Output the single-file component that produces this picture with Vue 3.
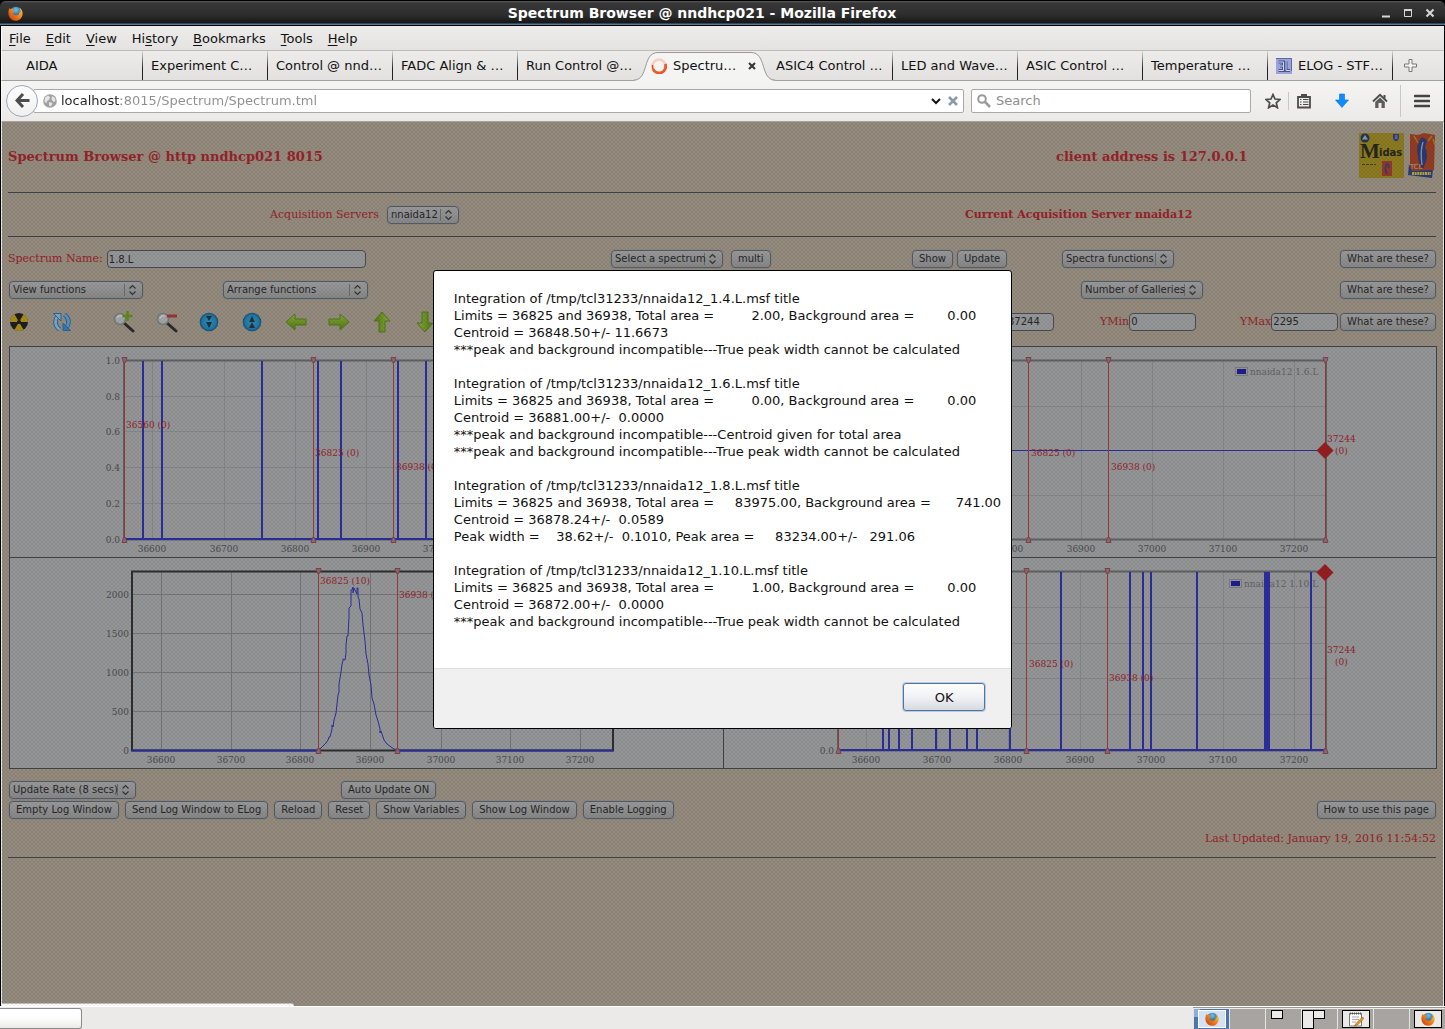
<script setup>
import { ref } from 'vue'

const menus = [
  ['', 'F', 'ile'],
  ['', 'E', 'dit'],
  ['', 'V', 'iew'],
  ['Hi', 's', 'tory'],
  ['', 'B', 'ookmarks'],
  ['', 'T', 'ools'],
  ['', 'H', 'elp'],
]

const tabs = [
  { label: 'AIDA' },
  { label: 'Experiment C…' },
  { label: 'Control @ nnd…' },
  { label: 'FADC Align & …' },
  { label: 'Run Control @…', edge: true },
  { label: 'Spectru…', active: true, edge: true },
  { label: 'ASIC4 Control …' },
  { label: 'LED and Wave…' },
  { label: 'ASIC Control …' },
  { label: 'Temperature …' },
  { label: 'ELOG - STF…', elog: true },
]

const url = ref('localhost:8015/Spectrum/Spectrum.tml')
const search = ref('')
const spectrumName = ref('1.8.L')
const xMax = ref('37244')
const yMin = ref('0')
const yMax = ref('2295')

const ticks = (xs, first) => xs.map((x, i) => ({ x, label: String(first + i * 100) }))

const charts = [
  {
    id: '1.4.L',
    view: '1 1 713 210',
    frame: { x: 115, y: 14, w: 489, h: 180 },
    tone: '#5f6163',
    xTicks: ticks([143, 215, 286, 357, 428], 36600),
    yTicks: [[14, '1.0'], [50, '0.8'], [85, '0.6'], [121, '0.4'], [157, '0.2'], [193, '0.0']].map(([y, label]) => ({ y, label })),
    yRight: 111,
    xLabelY: 206,
    spikes: [134, 153, 253, 309, 332, 389, 417],
    base: 193,
    cursors: [115, 304, 384],
    notes: [[117, 82, '36560 (0)'], [306, 110, '36825 (0)'], [387, 124, '36938 (0)']],
  },
  {
    id: '1.6.L',
    view: '0 1 713 210',
    frame: { x: 115, y: 14, w: 488, h: 180 },
    tone: '#5f6163',
    xTicks: ticks([286, 358, 429, 500, 571], 36800),
    yTicks: [60, 104, 149].map((y) => ({ y, label: '' })),
    yRight: 111,
    xLabelY: 206,
    spikes: [],
    base: 104,
    cursors: [115, 305, 385, 602],
    notes: [[308, 110, '36825 (0)'], [388, 124, '36938 (0)'], [604, 96, '37244'], [612, 108, '(0)']],
    diamond: [602, 104],
    legend: { x: 514, y: 23, text: 'nnaida12 1.6.L' },
  },
  {
    id: '1.8.L',
    view: '1 1 713 210',
    frame: { x: 123, y: 14, w: 481, h: 180 },
    tone: '#2c2e30',
    strong: true,
    xTicks: ticks([152, 222, 291, 361, 432, 501, 571], 36600),
    yTicks: [[37, '2000'], [76, '1500'], [115, '1000'], [154, '500'], [193, '0']].map(([y, label]) => ({ y, label })),
    yRight: 120,
    xLabelY: 206,
    spikes: [],
    base: 193,
    cursors: [309, 388],
    notes: [[311, 27, '36825 (10)'], [390, 41, '36938 (0)']],
    peak: 'M309 193L311 192L314 189L317 186L319 183L320 180H321L322 176L323 172V168L324 170L325 163L327 156L328 147L329 138L330 135V127L332 115L333 107L334 104V102L336 103L337 96V88L338 79H339L340 60V51L342 49L342 45V33H343L344 30V36L345 31L347 35L348 37V31H349V40L350 42L351 52L353 56L354 68L355 76L356 84L357 97L359 107L360 118L362 128L363 141L365 147L367 158L369 164L371 172V176L372 174L375 183L378 187L382 190L385 192L388 193',
  },
  {
    id: '1.10.L',
    view: '0 1 713 210',
    frame: { x: 115, y: 14, w: 488, h: 180 },
    tone: '#5f6163',
    xTicks: ticks([143, 214, 285, 357, 428, 500, 571], 36600),
    yTicks: [[50, ''], [86, ''], [121, ''], [157, ''], [193, '0.0']].map(([y, label]) => ({ y, label })),
    yRight: 111,
    xLabelY: 206,
    spikes: [160, 166, 176, 189, 213, 227, 244, 254, 287, 338, 407, 420, 428, 474, 542, 544, 546, 588],
    base: 193,
    cursors: [115, 303, 384, 602],
    notes: [[306, 110, '36825 (0)'], [386, 124, '36938 (0)'], [604, 96, '37244'], [612, 108, '(0)']],
    diamond: [602, 15],
    legend: { x: 508, y: 24, text: 'nnaida12 1.10.L' },
  },
]

const report = [
  'Integration of /tmp/tcl31233/nnaida12_1.4.L.msf title',
  'Limits = 36825 and 36938, Total area =         2.00, Background area =        0.00',
  'Centroid = 36848.50+/- 11.6673',
  '***peak and background incompatible---True peak width cannot be calculated',
  '',
  'Integration of /tmp/tcl31233/nnaida12_1.6.L.msf title',
  'Limits = 36825 and 36938, Total area =         0.00, Background area =        0.00',
  'Centroid = 36881.00+/-  0.0000',
  '***peak and background incompatible---Centroid given for total area',
  '***peak and background incompatible---True peak width cannot be calculated',
  '',
  'Integration of /tmp/tcl31233/nnaida12_1.8.L.msf title',
  'Limits = 36825 and 36938, Total area =     83975.00, Background area =      741.00',
  'Centroid = 36878.24+/-  0.0589',
  'Peak width =    38.62+/-  0.1010, Peak area =     83234.00+/-   291.06',
  '',
  'Integration of /tmp/tcl31233/nnaida12_1.10.L.msf title',
  'Limits = 36825 and 36938, Total area =         1.00, Background area =        0.00',
  'Centroid = 36872.00+/-  0.0000',
  '***peak and background incompatible---True peak width cannot be calculated',
].join('\n')

const logButtons = ['Empty Log Window', 'Send Log Window to ELog', 'Reload', 'Reset', 'Show Variables', 'Show Log Window', 'Enable Logging']
</script>

<template>
  <svg class="defs" aria-hidden="true">
    <defs>
      <radialGradient id="globe" cx="50%" cy="25%" r="70%">
        <stop offset="0" stop-color="#6cc3ee" />
        <stop offset="1" stop-color="#14386f" />
      </radialGradient>
      <linearGradient id="fox" x1="1" y1="0" x2="0" y2="1">
        <stop offset="0" stop-color="#ffd83a" />
        <stop offset=".45" stop-color="#f0861a" />
        <stop offset="1" stop-color="#c8330d" />
      </linearGradient>
      <linearGradient id="leaf" x1="0" y1="0" x2="0" y2="1">
        <stop offset="0" stop-color="#8da83c" />
        <stop offset="1" stop-color="#4c7a10" />
      </linearGradient>
      <radialGradient id="disc">
        <stop offset="0" stop-color="#2f8fb8" />
        <stop offset=".75" stop-color="#1f78a6" />
        <stop offset="1" stop-color="#1a4a72" />
      </radialGradient>
      <symbol id="firefox" viewBox="0 0 16 16">
        <circle cx="8.4" cy="7.4" r="6.6" fill="url(#globe)" />
        <path d="M1.6 2.2C1.9 3 2.4 3.2 3 3.200C4 2.900 5.500 3 6.200 4C5.200 4.400 5.300 5.300 6.800 5.800C6.600 7 5.500 7.200 5.200 7.800C5.400 9.500 8 10.600 10.200 9.600C11.600 9 12.600 7.500 12.200 5.600C13 6 13.200 6.800 13.200 7.300C13.700 5.200 13 3 11.800 1.600C14.600 3 15.900 6 15.500 9C15 13 12 15.600 8.200 15.700C4 15.700.9 12.600.5 8.600C.3 6 .8 3.900 1.600 2.200Z" fill="url(#fox)" />
      </symbol>
      <symbol id="arrow" viewBox="0 0 22 20">
        <path d="M1 10L10 2V7H21V13H10V18Z" fill="url(#leaf)" stroke="#4f771c" />
      </symbol>
    </defs>
  </svg>

  <div class="desktop">
    <div class="window">
      <header class="titlebar">
        <svg class="app-icon" width="15" height="15"><use href="#firefox" /></svg>
        <h1>Spectrum Browser @ nndhcp021 - Mozilla Firefox</h1>
        <div class="win-buttons">
          <button aria-label="Minimize"><svg width="10" height="10"><path d="M1 8.500H9" stroke="#d6d6d6" stroke-width="2" /></svg></button>
          <button aria-label="Maximize"><svg width="10" height="10"><path d="M1.500 2.500H8.500V8.500H1.500Z" fill="none" stroke="#d6d6d6" /><path d="M1 2H9" stroke="#d6d6d6" stroke-width="2" /></svg></button>
          <button aria-label="Close"><svg width="10" height="10"><path d="M1.500 1.500L8.500 8.500M8.500 1.500L1.500 8.500" stroke="#d6d6d6" stroke-width="2" /></svg></button>
        </div>
      </header>

      <nav class="menubar">
        <a v-for="m in menus" :key="m.join('')" href="#">{{ m[0] }}<u>{{ m[1] }}</u>{{ m[2] }}</a>
      </nav>

      <div class="tabs" role="tablist">
        <button v-for="t in tabs" :key="t.label" class="tab" :class="{ active: t.active, edge: t.edge }" role="tab">
          <svg v-if="t.active" class="tab-shape" viewBox="0 0 141 30" preserveAspectRatio="none">
            <path d="M0 29.500C15 29.500 8 1.500 24 1.500H117C133 1.500 126 29.500 141 29.500V30H0Z" fill="#f4f4f3" />
            <path d="M0 29C15 29 8 1.500 24 1.500H117C133 1.500 126 29 141 29" fill="none" stroke="#999" />
          </svg>
          <svg v-if="t.active" class="tab-icon" width="16" height="16" viewBox="0 0 16 16">
            <circle cx="8" cy="8" r="6.500" fill="none" stroke="#f6cfc0" stroke-width="2.600" />
            <path d="M14.200 6A6.500 6.500 0 0 1 2 11" fill="none" stroke="#ea5a2c" stroke-width="2.800" />
            <path d="M2 11A6.500 6.500 0 0 1 1.600 7" fill="none" stroke="#d8481c" stroke-width="1.500" />
          </svg>
          <svg v-if="t.elog" class="tab-icon" width="16" height="16" viewBox="0 0 16 16">
            <path d="M0 0H16V16H0Z" fill="#9ba3dc" />
            <path d="M0 .5H15.500V13" fill="none" stroke="#5c6aa0" />
            <path d="M2.500 4H7.500V12.500H2.500M4 8H7.500M10 3.500V12.500H14" fill="none" stroke="#48548c" stroke-width="3" />
            <path d="M2.500 4H7.500V12.500H2.500M4 8H7.500M10 3.500V12.500H14" fill="none" stroke="#cdd2f6" />
          </svg>
          <span>{{ t.label }}</span>
          <svg v-if="t.active" class="tab-close" width="8" height="8"><path d="M1 1L7 7M7 1L1 7" stroke="#333" stroke-width="2" /></svg>
        </button>
        <button class="new-tab" aria-label="New tab">
          <svg width="13" height="13"><path d="M5 .5H8V5H12.500V8H8V12.500H5V8H.5V5H5Z" fill="#f4f4f4" stroke="#777" /></svg>
        </button>
      </div>

      <div class="navbar">
        <button class="back" aria-label="Back">
          <svg width="15" height="15"><path d="M8 1L2 7.500L8 14M2.500 7.500H14.500" fill="none" stroke="#4c4c4c" stroke-width="3" /></svg>
        </button>
        <div class="field address">
          <svg width="14" height="14" viewBox="0 0 14 14">
            <circle cx="7" cy="7" r="6.800" fill="#a0a0a0" />
            <path d="M2 3.500L5 1.500L7 3L6 6L4 7L3.500 9.500L1.500 7.500ZM9 2L12 4L12.500 7L10.500 8L8.500 5.500ZM6 8L9.500 9L8 12.500L6 11.500Z" fill="#e6e6e6" />
          </svg>
          <input v-model="url" aria-label="Address" />
          <svg width="12" height="12"><path d="M2 4L6 8L10 4" fill="none" stroke="#111" stroke-width="2" /></svg>
          <svg width="10" height="10"><path d="M1 1L9 9M9 1L1 9" stroke="#8c9aa8" stroke-width="2.500" /></svg>
        </div>
        <div class="field search">
          <svg width="14" height="14"><circle cx="5" cy="5" r="3.800" fill="none" stroke="#9a9a9a" stroke-width="2" /><path d="M8 8L13 13" stroke="#9a9a9a" stroke-width="2.500" /></svg>
          <input v-model="search" aria-label="Search" placeholder="Search" />
        </div>
        <div class="tools">
          <button aria-label="Bookmark"><svg width="16" height="16"><path d="M8 1.500L10 6L15 6.500L11.300 9.800L12.400 14.700L8 12.100L3.600 14.700L4.700 9.800L1 6.500L6 6Z" fill="none" stroke="#4c4c4c" stroke-width="1.700" /></svg></button>
          <i class="rule"></i>
          <button aria-label="Bookmarks menu"><svg width="16" height="16"><path d="M2 4H14V14.500H2Z" fill="none" stroke="#4c4c4c" stroke-width="1.800" /><path d="M5 1H11V4H5Z" fill="#4c4c4c" /><path d="M4 6.500H5.500M7 6.500H12.500M4 9H5.500M7 9H12.500M4 11.500H5.500M7 11.500H12.500" stroke="#4c4c4c" stroke-width="1.200" /></svg></button>
          <button class="wide" aria-label="Downloads"><svg width="16" height="16"><path d="M5.500 1H10.500V7H14.500L8 14.500L1.500 7H5.500Z" fill="#0f8cff" stroke="#0a72d8" stroke-width=".6" /></svg></button>
          <button class="wide" aria-label="Home"><svg width="16" height="16"><path d="M1 8.500L8 1.800L15 8.500" fill="none" stroke="#4c4c4c" stroke-width="1.800" /><path d="M11.500 2H13.500V6L11.500 4Z" fill="#4c4c4c" /><path d="M3.200 9L8 4.500L12.800 9V15H9.500V10H6.500V15H3.200Z" fill="#5c5c5c" /></svg></button>
          <i class="rule tall"></i>
          <button class="wide" aria-label="Open menu"><svg width="16" height="14"><path d="M1 2H15M1 7H15M1 12H15" stroke="#444" stroke-width="2.600" stroke-linecap="round" /></svg></button>
        </div>
      </div>

      <main class="page">
        <section class="head">
          <h2>Spectrum Browser @ http nndhcp021 8015</h2>
          <h2>client address is 127.0.0.1</h2>
          <div class="logos">
            <svg width="45" height="45" viewBox="0 0 45 45" role="img" aria-label="Midas">
              <path d="M0 0H45V45H0Z" fill="#8c7b20" />
              <circle cx="6" cy="5" r="4.500" fill="#233654" />
              <path d="M3 6.500L6 2L9 6.500Z" fill="#8d9aa4" />
              <path d="M34 1H40V5Q40 7 37 8.500Q34 7 34 5Z" fill="#2b3d7c" />
              <path d="M36 3H38.500M36 5H38.500" stroke="#9298a8" />
              <text x="1" y="25" font-size="21" class="midas">M</text>
              <text x="20" y="23" font-size="10" class="midas-sans">idas</text>
              <path d="M3 31.500H17" stroke="#44401f" stroke-dasharray="3 1" />
              <path d="M23 28H33V43H23Z" fill="#93392a" />
              <path d="M28 30Q25 36 28 41M29 31L30 35" fill="none" stroke="#303d78" stroke-width="1.600" />
            </svg>
            <svg width="28" height="45" viewBox="0 0 28 45" role="img" aria-label="TCL powered">
              <path d="M2 1L10 2L16 0L27 2L26 37L2 38Z" fill="#943c23" />
              <path d="M1 31L4 38L25 36L24 45L0 42Z" fill="#2a3c74" />
              <path d="M2 30L25 31V37L4 38Z" fill="#943c23" />
              <path d="M14 4Q7 12 10 24Q11 32 15 36L17 31Q21 22 17 14L19 7Z" fill="#283a72" />
              <path d="M15 9Q12 18 14 32" fill="none" stroke="#858fa8" stroke-width="1.400" />
              <path d="M6 3L10 10M20 8L24 3M25 6L27 12" stroke="#a17b28" stroke-width="1.400" />
              <text x="2" y="36" class="tcl">TCL</text>
              <path d="M4 40.500H23" stroke="#b0a63d" stroke-width="3" stroke-dasharray="2 .6" />
            </svg>
          </div>
        </section>
        <hr />
        <section class="servers">
          <div class="line wide-gap">
            <label for="server">Acquisition Servers</label>
            <select id="server" class="w72"><option>nnaida12</option></select>
          </div>
          <strong>Current Acquisition Server nnaida12</strong>
        </section>
        <hr />

        <section class="row row-name">
          <div class="line tight">
            <label for="spectrum">Spectrum Name:</label>
            <input id="spectrum" v-model="spectrumName" class="w259" />
          </div>
          <div class="line wide-gap">
            <select aria-label="Select a spectrum" class="w112"><option>Select a spectrum</option></select>
            <button>multi</button>
          </div>
          <div class="line tight"><button>Show</button><button>Update</button></div>
          <div class="line"><select aria-label="Spectra functions" class="w112"><option>Spectra functions</option></select></div>
          <button>What are these?</button>
        </section>

        <section class="row row-view">
          <select aria-label="View functions" class="w134"><option>View functions</option></select>
          <select aria-label="Arrange functions" class="w145"><option>Arrange functions</option></select>
          <select aria-label="Number of Galleries" class="w122"><option>Number of Galleries</option></select>
          <button>What are these?</button>
        </section>

        <section class="row row-range">
          <div class="icons">
            <button aria-label="Clear"><svg width="20" height="20" viewBox="0 0 20 20"><circle cx="10" cy="10" r="9" fill="#1f1f1f" /><path d="M10 10L5.500 2.200A9 9 0 0 1 14.500 2.200ZM10 10L19 10A9 9 0 0 1 14.500 17.800ZM10 10L5.500 17.800A9 9 0 0 1 1 10Z" fill="#a88c1c" transform="rotate(180 10 10)" /><circle cx="10" cy="10" r="2" fill="#1f1f1f" /></svg></button>
            <button aria-label="Refresh"><svg width="20" height="20" viewBox="0 0 20 20"><path d="M7.500 17.500Q1 12 5 5" fill="none" stroke="#27649e" stroke-width="4.400" /><path d="M7.500 17.500Q1 12 5 5" fill="none" stroke="#7fa6c4" stroke-width="2.600" /><path d="M1.500 1.500H9V9Z" fill="#7fa6c4" stroke="#27649e" /><path d="M12.500 2.500Q19 8 15 15" fill="none" stroke="#27649e" stroke-width="4.400" /><path d="M12.500 2.500Q19 8 15 15" fill="none" stroke="#5b93bd" stroke-width="2.600" /><path d="M18.500 18.500H11V11Z" fill="#3878ae" stroke="#27649e" /></svg></button>
            <button class="gap" aria-label="Zoom in"><svg width="22" height="22" viewBox="0 0 22 22"><path d="M11 12L20 20" stroke="#2b2b2b" stroke-width="3" stroke-linecap="round" /><circle cx="7" cy="8" r="5.500" fill="#a3a6a8" stroke="#77797b" stroke-width="1.500" /><path d="M4 7Q6 4 9 5" fill="none" stroke="#c1c3c4" stroke-width="1.500" /><path d="M14.500 0V10M9.500 5H19.500" stroke="#5d8a1c" stroke-width="2.600" /></svg></button>
            <button aria-label="Zoom out"><svg width="22" height="22" viewBox="0 0 22 22"><path d="M11 12L20 20" stroke="#2b2b2b" stroke-width="3" stroke-linecap="round" /><circle cx="7" cy="8" r="5.500" fill="#a3a6a8" stroke="#77797b" stroke-width="1.500" /><path d="M4 7Q6 4 9 5" fill="none" stroke="#c1c3c4" stroke-width="1.500" /><path d="M11 5H21" stroke="#9c3433" stroke-width="3" /></svg></button>
            <button aria-label="Compress"><svg width="20" height="20" viewBox="0 0 20 20"><circle cx="10" cy="10" r="9.300" fill="url(#disc)" /><path d="M7 4H13L10 9ZM7 10H13L10 16Z" fill="#25303a" /></svg></button>
            <button aria-label="Expand"><svg width="20" height="20" viewBox="0 0 20 20"><circle cx="10" cy="10" r="9.300" fill="url(#disc)" /><path d="M7 10H13L10 4ZM7 16H13L10 10Z" fill="#25303a" /></svg></button>
            <button aria-label="Left"><svg width="22" height="20"><use href="#arrow" /></svg></button>
            <button aria-label="Right"><svg class="flip" width="22" height="20"><use href="#arrow" /></svg></button>
            <button aria-label="Up"><svg class="up" width="22" height="20"><use href="#arrow" /></svg></button>
            <button aria-label="Down"><svg class="down" width="22" height="20"><use href="#arrow" /></svg></button>
          </div>
          <input v-model="xMax" class="w48" aria-label="XMax" />
          <div class="line none"><label for="ymin">YMin</label><input id="ymin" v-model="yMin" class="w67" /></div>
          <div class="line none"><label for="ymax">YMax</label><input id="ymax" v-model="yMax" class="w67" /></div>
          <button>What are these?</button>
        </section>

        <section class="gallery">
          <svg v-for="c in charts" :key="c.id" :viewBox="c.view" class="chart">
            <g :class="['grid', { strong: c.strong }]">
              <path v-for="t in c.xTicks" :key="t.x" :d="`M${t.x + 0.5} ${c.frame.y}V194`" />
              <path v-for="t in c.yTicks" :key="t.y" :d="`M${c.frame.x} ${t.y + 0.5}H${c.frame.x + c.frame.w}`" />
            </g>
            <rect :x="c.frame.x" :y="c.frame.y + 0.5" :width="c.frame.w" :height="c.frame.h - 1" fill="none" :stroke="c.tone" stroke-width="2" />
            <text v-for="t in c.xTicks" :key="'x' + t.x" class="tick" text-anchor="middle" :x="t.x" :y="c.xLabelY">{{ t.label }}</text>
            <text v-for="t in c.yTicks" :key="'y' + t.y" class="tick" text-anchor="end" :x="c.yRight" :y="t.y + 4">{{ t.label }}</text>
            <g v-if="c.legend">
              <rect :x="c.legend.x - 1.500" :y="c.legend.y - 1.500" width="12" height="8" class="key-frame" />
              <rect :x="c.legend.x" :y="c.legend.y" width="9" height="5" fill="#1d1e92" />
              <text :x="c.legend.x + 13" :y="c.legend.y + 6" class="legend">{{ c.legend.text }}</text>
            </g>
            <path v-if="c.base < 193" :d="`M${c.frame.x} ${c.base + 0.5}H${c.frame.x + c.frame.w}`" class="curve thin" />
            <path v-else :d="c.peak ? `M${c.frame.x} 193.5H309M388 193.5H604` : `M${c.frame.x} 193H${c.frame.x + c.frame.w}`" class="curve" />
            <path v-for="s in c.spikes" :key="'s' + s" :d="`M${s} 15V193`" class="spike" />
            <path v-if="c.peak" :d="c.peak" class="curve thin" />
            <g v-for="r in c.cursors" :key="'r' + r" class="cursor">
              <path :d="`M${r + 0.5} 14V194`" />
              <path :d="`M${r - 2} 11.500H${r + 3}L${r + 1.5} 16.500H${r - 0.5}Z`" class="mark" />
              <path :d="`M${r - 2} 196.500H${r + 3}L${r + 1.5} 191.500H${r - 0.5}Z`" class="mark" />
            </g>
            <path v-if="c.diamond" :d="`M${c.diamond[0]} ${c.diamond[1] - 8}l8.500 8.500l-8.500 8.500l-8.500 -8.500Z`" fill="#961f22" />
            <text v-for="n in c.notes" :key="n.join()" :x="n[0]" :y="n[1]" class="note">{{ n[2] }}</text>
          </svg>
        </section>

        <section class="bottom">
          <div class="rate">
            <select aria-label="Update rate" class="w127"><option>Update Rate (8 secs)</option></select>
            <button>Auto Update ON</button>
          </div>
          <div class="line logs">
            <button v-for="b in logButtons" :key="b">{{ b }}</button>
            <button class="last">How to use this page</button>
          </div>
          <p>Last Updated: January 19, 2016 11:54:52</p>
        </section>
        <hr />

        <div class="status"></div>
        <div class="backdrop">
          <div class="dialog" role="dialog" aria-modal="true">
            <pre>{{ report }}</pre>
            <footer><button>OK</button></footer>
          </div>
        </div>
      </main>
    </div>

    <footer class="panel">
      <button class="task" aria-label="Window"></button>
      <div class="workspaces">
        <div class="ws current"><i class="mini"></i><span class="thumb"><svg width="14" height="14"><use href="#firefox" /></svg></span></div>
        <div class="ws"></div>
        <div class="ws top"><i class="win w12"></i></div>
        <div class="ws top"><i class="win w12 long"></i><i class="win w12"></i></div>
        <div class="ws"><span class="thumb"><svg width="16" height="16" viewBox="0 0 16 16"><path d="M1.500 2.500H13.500V15H1.500Z" fill="#fafafa" stroke="#777" /><path d="M2 2.500H13" stroke="#555" stroke-width="2" stroke-dasharray="1 1" /><path d="M4 6H11M4 8.500H11M4 11H8" stroke="#aaa" /><path d="M14.500 6L8 12.500L6.500 15L9.500 14L16 7.500Z" fill="#f4931e" stroke="#8a5a12" stroke-width=".6" /></svg></span></div>
        <div class="ws"></div>
        <div class="ws"><span class="thumb"><svg width="14" height="14"><use href="#firefox" /></svg></span></div>
      </div>
    </footer>
  </div>
</template>

<style>
body {
  margin: 0;
  background: #ebeae8;
}
</style>

<style scoped>
.defs {
  position: absolute;
  width: 0;
  height: 0;
}
.desktop {
  display: flex;
  flex-direction: column;
  min-height: 100vh;
  font: 13px/17px "DejaVu Sans", sans-serif;
  color: #111;
}
button {
  font: inherit;
  color: inherit;
  padding: 0;
  border: 0;
  background: none;
}
svg {
  display: block;
  flex: none;
}
.window {
  flex: 1;
  display: flex;
  flex-direction: column;
  background: #000;
}
.titlebar {
  display: flex;
  align-items: center;
  height: 26px;
  box-sizing: border-box;
  padding: 0 10px 0 8px;
  border-top: 1px solid #000;
  border-bottom: 1px solid #000;
  border-radius: 6px 6px 0 0;
  background: linear-gradient(#5a5a5a, #383838 2px, #2d2d2d 14px, #161616 22px, #5878a0 23px);
}
.titlebar h1 {
  flex: 1;
  margin: 0;
  font-size: 14px;
  text-align: center;
  color: #fff;
}
.win-buttons {
  display: flex;
  gap: 12px;
}
.menubar,
.tabs,
.navbar {
  display: flex;
  box-sizing: border-box;
  margin: 0 1px;
  border-left: 1px solid #fafafa;
}
.menubar {
  height: 25px;
  align-items: center;
  gap: 15px;
  padding-left: 7px;
  background: linear-gradient(#edecea, #e4e3e1);
  border-bottom: 1px solid #bcbbb9;
}
.menubar a {
  color: #111;
  text-decoration: none;
}
.menubar u {
  text-underline-offset: 2px;
}
.tabs {
  height: 30px;
  padding-left: 16px;
  background: linear-gradient(#edecea, #e2e1df);
  border-bottom: 1px solid #a2a19f;
}
.tab {
  position: relative;
  flex: 0 1 125px;
  display: flex;
  align-items: center;
  gap: 6px;
  min-width: 0;
  padding: 0 8px;
  box-sizing: border-box;
  border-right: 1px solid;
  border-image: linear-gradient(#e6e5e3, #222 60%, #222) 1;
  white-space: nowrap;
}
.tab.edge {
  border-color: transparent;
  border-image: none;
}
.tab span {
  position: relative;
}
.tab-shape {
  position: absolute;
  left: -9px;
  top: 0;
  width: 141px;
  height: 30px;
}
.tab-icon {
  position: relative;
}
.tab-close {
  position: relative;
  margin-left: 6px;
}
.new-tab {
  margin-left: 11px;
}
.navbar {
  height: 41px;
  align-items: center;
  padding: 0 14px 1px 4px;
  background: linear-gradient(#f4f4f3, #ebeae8);
  border-bottom: 1px solid #a5a29d;
}
.back {
  position: relative;
  z-index: 1;
  display: grid;
  place-items: center;
  width: 32px;
  height: 32px;
  box-sizing: border-box;
  border: 1px solid #9aa7b8;
  border-radius: 50%;
  background: linear-gradient(#fff, #f0f0f0);
}
.field {
  display: flex;
  align-items: center;
  height: 24px;
  box-sizing: border-box;
  border: 1px solid #aaa9a7;
  border-radius: 2px;
  background: #fff;
}
.field input {
  flex: 1;
  min-width: 0;
  height: 20px;
  padding: 0;
  border: 0;
  outline: 0;
  background: none;
  font: inherit;
}
.address {
  flex: 1;
  margin-left: -5px;
  padding: 0 5px 0 9px;
  gap: 4px;
}
.address svg:last-child {
  margin-left: 2px;
}
.address input {
  background: linear-gradient(90deg, #222 60px, #8e8e8e 60px);
  -webkit-background-clip: text;
  background-clip: text;
  color: transparent;
}
.search {
  width: 280px;
  margin-left: 7px;
  padding: 0 5px;
  gap: 5px;
}
.search input::placeholder {
  color: #8e8e8e;
  opacity: 1;
}
.tools {
  display: flex;
  align-items: center;
  margin-left: 14px;
}
.tools .rule {
  width: 1px;
  height: 18px;
  margin: 0 7px;
  background: #c3c8ce;
}
.tools .tall {
  height: 32px;
  margin: 0 0 0 12px;
}
.tools .wide {
  margin-left: 22px;
}
.tools .tall + .wide {
  margin-left: 13px;
}
.page {
  position: relative;
  flex: 1;
  box-sizing: border-box;
  margin: 0 1px;
  padding: 0 7px 20px 6px;
  border-left: 1px solid #e6e4e0;
  border-right: 1px solid #e6e4e0;
  background: #958b7e;
  font: 11px/18px "DejaVu Serif", serif;
  color: #97232a;
}
hr {
  height: 1px;
  margin: 0;
  border: 0;
  background: #3f4347;
}
.head {
  display: grid;
  grid-template-columns: 1048fr 303fr auto;
  align-items: center;
  height: 70px;
}
.head h2 {
  margin: 0;
  font-size: 13px;
  line-height: 18px;
}
.logos {
  display: flex;
  align-self: start;
  gap: 4px;
  margin-top: 11px;
}
.midas {
  font-family: "Liberation Serif", serif;
  font-weight: bold;
  fill: #26261c;
}
.midas-sans {
  font-family: "DejaVu Sans", sans-serif;
  font-weight: bold;
  fill: #26261c;
}
.tcl {
  font: 7px "DejaVu Sans", sans-serif;
  fill: #a8a39b;
}
.servers {
  display: grid;
  grid-template-columns: 957fr 471fr;
  align-items: center;
  height: 43px;
}
.servers .line {
  margin-left: 262px;
}
.line {
  display: flex;
  align-items: center;
  gap: 6px;
}
.tight {
  gap: 4px;
}
.wide-gap {
  gap: 8px;
}
.none {
  gap: 0;
}
.page button:not(.dialog button):not(.icons button),
.page select,
.page input {
  height: 18px;
  box-sizing: border-box;
  border: 1px solid #555c64;
  border-radius: 4px;
  font: 10px/14px "DejaVu Sans", sans-serif;
  color: #26282a;
  white-space: nowrap;
}
.page button:not(.dialog button):not(.icons button) {
  padding: 0 6px;
  background: linear-gradient(#9a9a9a, #888);
  box-shadow: 0 0 0 1px rgba(120, 130, 140, 0.35);
}
.page select {
  appearance: none;
  padding: 0 0 0 3px;
  background: url("data:image/svg+xml,%3Csvg xmlns='http://www.w3.org/2000/svg' width='18' height='14'%3E%3Cpath d='M.5 1V13' stroke='%23686c70'/%3E%3Cpath d='M5.500 5.500L8.500 2.500L11.500 5.500M5.500 8.500L8.500 11.500L11.500 8.500' fill='none' stroke='%23303438' stroke-width='1.200'/%3E%3C/svg%3E") right center no-repeat, linear-gradient(#9a9a9a, #888);
  box-shadow: 0 0 0 1px rgba(120, 130, 140, 0.35);
}
.page input {
  padding: 0 1px;
  background: #959798;
  border-color: #474c52;
}
.w48 { width: 48px; }
.w67 { width: 67px; }
.w72 { width: 72px; }
.w112 { width: 112px; }
.w122 { width: 122px; }
.w127 { width: 127px; }
.w134 { width: 134px; }
.w145 { width: 145px; }
.w259 { width: 259px; }
.row {
  display: grid;
  align-items: center;
  box-sizing: border-box;
  padding-left: 1px;
}
.row-name {
  grid-template-columns: 602fr 301fr 150fr 278fr 96px;
  height: 44px;
}
.row-name > .line:first-child {
  margin-left: -1px;
}
.row-view {
  grid-template-columns: 214fr 858fr 259fr 96px;
  height: 18px;
}
.row-range {
  grid-template-columns: 997fr 94fr 140fr 100fr 96px;
  height: 47px;
  padding-bottom: 2px;
}
.icons {
  display: flex;
  align-items: center;
  gap: 21px;
}
.icons button {
  flex: none;
  width: 22px;
}
.icons .gap {
  margin-left: 18px;
}
.flip {
  transform: scaleX(-1);
}
.up {
  transform: rotate(90deg);
}
.down {
  transform: rotate(-90deg);
}
.gallery {
  display: grid;
  grid-template-columns: 1fr 1fr;
  margin: 0 -1px 0 1px;
  border: 1px solid #3f4347;
  background: #949698;
}
.chart {
  width: 100%;
  height: auto;
}
.chart:nth-child(odd) {
  box-shadow: 1px 0 #3f4347;
}
.chart:nth-child(n + 3) {
  border-top: 1px solid #3f4347;
}
.grid path {
  stroke: #85878a;
}
.grid.strong path {
  stroke: #747678;
}
.tick,
.note,
.legend {
  font: 9px "DejaVu Serif", serif;
  fill: #4a4c4e;
}
.note {
  fill: #97232a;
}
.legend {
  fill: #626466;
}
.key-frame {
  fill: none;
  stroke: #7c7e80;
}
.curve,
.spike {
  fill: none;
  stroke: #2c2ea0;
  stroke-width: 2;
}
.thin {
  stroke-width: 1;
}
.cursor path {
  stroke: #983a3e;
  fill: none;
}
.cursor .mark {
  fill: #6f7684;
}
.bottom {
  padding: 12px 0 9px 1px;
}
.rate {
  display: grid;
  grid-template-columns: 332px auto;
  justify-content: start;
  margin-bottom: 2px;
}
.logs {
  gap: 6px;
}
.logs .last {
  margin-left: auto;
}
.bottom p {
  margin: 11px 0 0;
  text-align: right;
}
.status {
  position: absolute;
  left: 0;
  bottom: 0;
  width: 292px;
  height: 3px;
  background: #fff;
  border-top: 1px solid #c4c2be;
  border-top-right-radius: 3px;
  box-sizing: border-box;
}
.backdrop {
  position: absolute;
  inset: 0;
  display: flex;
  align-items: flex-start;
  justify-content: center;
  padding-top: 148px;
  background:
    radial-gradient(circle, rgba(0, 0, 0, 0.07) 1px, transparent 1px) 0 0 / 4px 4px,
    radial-gradient(circle, rgba(0, 0, 0, 0.07) 1px, transparent 1px) 2px 2px / 4px 4px;
}
.dialog {
  box-sizing: border-box;
  max-width: 581px;
  border: 1px solid #000;
  border-radius: 3px;
  background: #fff;
  overflow: hidden;
  color: #111;
}
.dialog pre {
  margin: 0;
  padding: 19px 10px 38px 20px;
  font: 13px/17px "DejaVu Sans", sans-serif;
}
.dialog footer {
  display: flex;
  justify-content: flex-end;
  padding: 14px 26px 17px;
  border-top: 1px solid #dfdfdf;
  background: #f0f0f0;
}
.dialog button {
  width: 82px;
  height: 28px;
  border: 1px solid #50769f;
  border-radius: 3px;
  background: linear-gradient(#fbfcfd, #f0f2f5 50%, #d6dae0);
  box-shadow: 0 0 0 1px #b9cbe0;
  font: 13px/17px "DejaVu Sans", sans-serif;
}
.panel {
  display: flex;
  justify-content: space-between;
  height: 23px;
  box-sizing: border-box;
  border-top: 1px solid #fff;
  background: #ebeae8;
}
.task {
  width: 82px;
  margin-top: 1px;
  border: 1px solid #8b8a88;
  border-left: 0;
  border-radius: 0 3px 3px 0;
  background: linear-gradient(#fff, #fdfdfd 50%, #ebeae8);
}
.workspaces {
  display: flex;
  padding-top: 1px;
  border-top: 1px solid #9a9795;
  box-sizing: border-box;
}
.ws {
  position: relative;
  display: flex;
  align-items: center;
  justify-content: center;
  width: 36px;
  box-sizing: border-box;
  border-left: 1px solid #e8e6e4;
  background: #a8a4a1;
}
.current {
  background: #4c76a9;
}
.mini {
  position: absolute;
  left: 0;
  top: 0;
  width: 6px;
  height: 8px;
  background: #8caedb;
}
.thumb {
  display: grid;
  place-items: center;
  width: 28px;
  height: 18px;
  box-sizing: border-box;
  border: 1px solid #000;
  background: #ebeae8;
}
.current .thumb {
  position: relative;
  border-color: #fff;
  background: #d4e1f4;
}
.ws.top {
  align-items: flex-start;
  padding-right: 12px;
}
.win {
  height: 9px;
  margin: 1px 0 0 -1px;
  box-sizing: border-box;
  border: 1px solid #000;
  background: #ebeae8;
}
.w12 {
  width: 12px;
}
.long {
  height: 19px;
}
</style>
